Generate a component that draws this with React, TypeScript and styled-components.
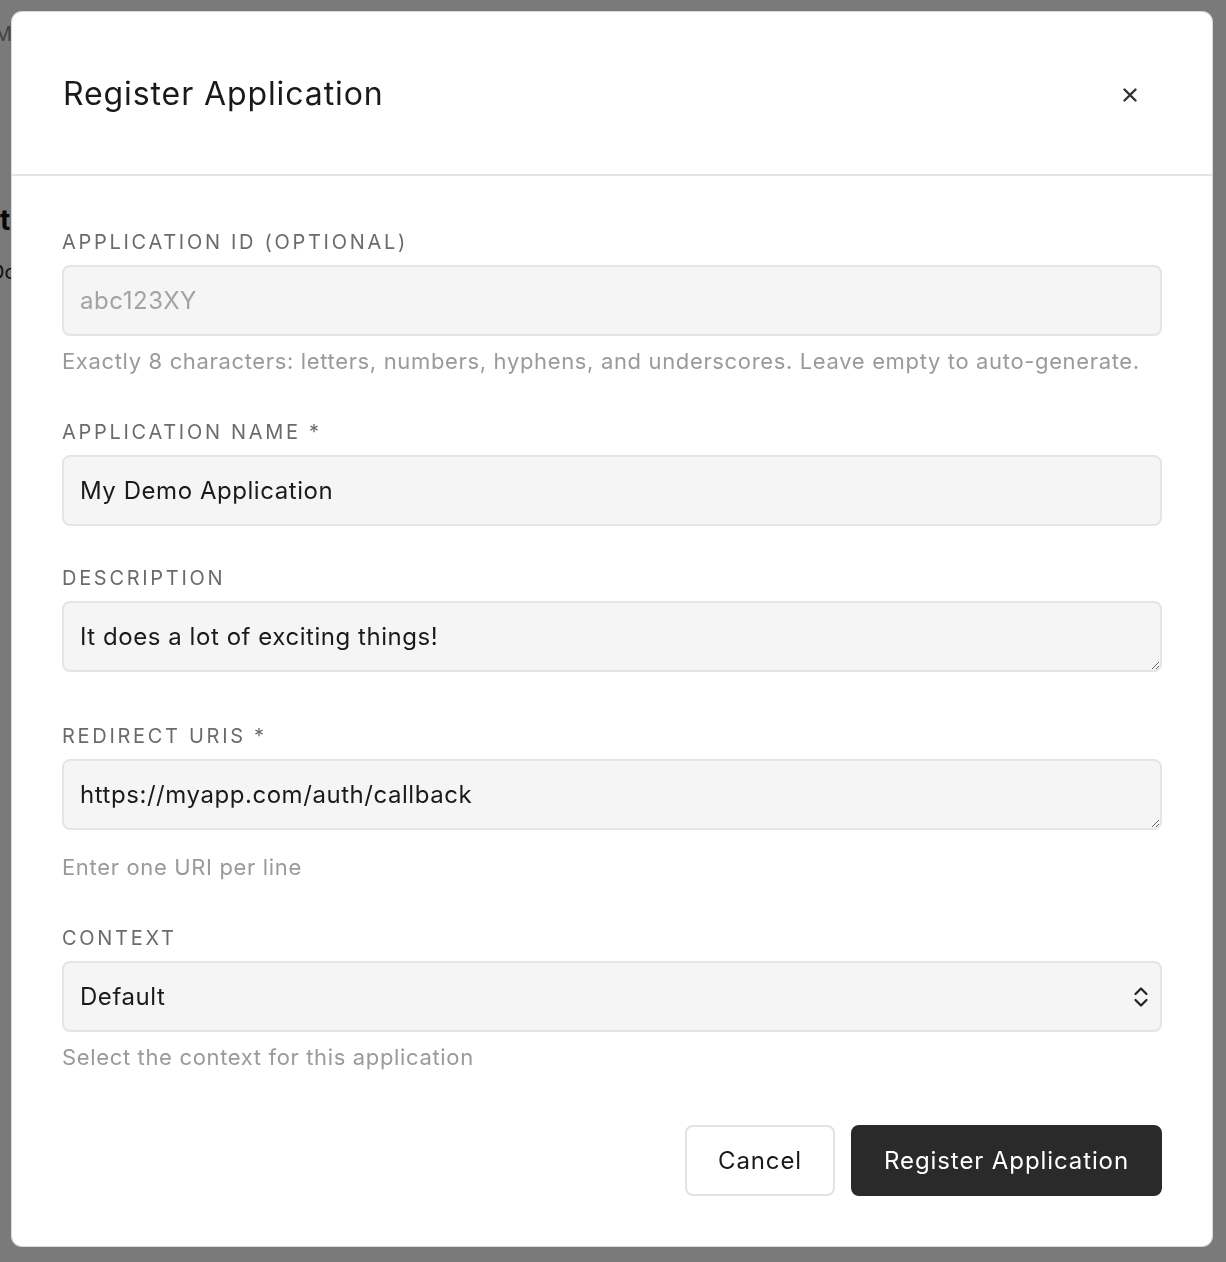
import styled, { createGlobalStyle } from "styled-components";

const GlobalStyle = createGlobalStyle`
  * {
    box-sizing: border-box;
  }
  html, body {
    margin: 0;
    padding: 0;
    background: #ffffff;
    font-family: Inter, "Noto Sans", "Liberation Sans", sans-serif;
  }
`;

const Page = styled.div`
  min-height: 1262px;
  padding-top: 22px;
  overflow: hidden;
`;

const PageLine = styled.div<{ $size: number; $weight?: number; $color: string; $shift: number; $top: number }>`
  margin-left: ${(p) => -p.$shift}px;
  margin-top: ${(p) => p.$top}px;
  font-size: ${(p) => p.$size}px;
  font-weight: ${(p) => p.$weight || 400};
  color: ${(p) => p.$color};
  line-height: 1.2;
  white-space: nowrap;
`;

const Overlay = styled.div`
  position: fixed;
  inset: 0;
  background: rgba(0, 0, 0, 0.52);
  padding: 12px 14px 16px 12px;
`;

const Modal = styled.div`
  width: 1200px;
  height: 1234px;
  background: #ffffff;
  border-radius: 10px;
  box-shadow: 0 0 0 1px #d9d9d9;
  display: flex;
  flex-direction: column;
`;

const Header = styled.div`
  height: 164px;
  padding: 0 50px 0 51px;
  display: flex;
  align-items: center;
  justify-content: space-between;
  border-bottom: 2px solid #e4e4e4;
`;

const Title = styled.h2`
  margin: 0;
  font-size: 32px;
  font-weight: 400;
  color: #1a1a1a;
  letter-spacing: 0.9px;
`;

const CloseButton = styled.button`
  width: 40px;
  height: 40px;
  margin: 4px 12px 0 0;
  border: none;
  background: transparent;
  padding: 0;
  display: flex;
  align-items: center;
  justify-content: center;
  cursor: pointer;
`;

const Body = styled.div`
  padding: 54px 50px 0 50px;
  flex: 1;
  display: flex;
  flex-direction: column;
`;

const Field = styled.div`
  margin-bottom: 40px;
`;

const Label = styled.label`
  display: block;
  font-size: 20px;
  line-height: 24px;
  letter-spacing: 2.7px;
  text-transform: uppercase;
  color: #6b6b6b;
  margin-bottom: 11px;
`;

const fieldBase = `
  display: block;
  width: 100%;
  height: 71px;
  background: #f5f5f5;
  border: 2px solid #e5e5e5;
  border-radius: 8px;
  font-family: Inter, "Noto Sans", "Liberation Sans", sans-serif;
  font-size: 24px;
  letter-spacing: 0.55px;
  color: #1a1a1a;
  padding: 0 16px;
  outline: none;
`;

const Input = styled.input`
  ${fieldBase}

  &::placeholder {
    color: #a3a3a3;
  }
`;

const TextArea = styled.textarea`
  ${fieldBase}
  padding: 19px 16px 0 16px;
  line-height: 30px;
  resize: vertical;
  margin-bottom: 12px;
`;

const SelectWrap = styled.div`
  position: relative;
`;

const Select = styled.select`
  ${fieldBase}
  appearance: none;
  -webkit-appearance: none;
  padding-right: 50px;
`;

const SelectIcon = styled.svg`
  position: absolute;
  right: 13px;
  top: 50%;
  transform: translateY(-50%);
  pointer-events: none;
`;

const Help = styled.div`
  padding: 10px 0 4px;
  font-size: 22px;
  line-height: 30px;
  color: #9a9a9a;
  letter-spacing: 0.65px;
`;

const Footer = styled.div`
  display: flex;
  justify-content: flex-end;
  gap: 16px;
  margin-top: 9px;
`;

const Button = styled.button<{ $primary?: boolean }>`
  height: 71px;
  padding: 0 31px;
  border-radius: 8px;
  font-family: Inter, "Noto Sans", "Liberation Sans", sans-serif;
  font-size: 24px;
  letter-spacing: 0.9px;
  cursor: pointer;
  border: 2px solid ${(p) => (p.$primary ? "#2a2a2a" : "#e3e3e3")};
  background: ${(p) => (p.$primary ? "#2a2a2a" : "#ffffff")};
  color: ${(p) => (p.$primary ? "#ffffff" : "#1a1a1a")};
`;

export default function App() {
  return (
    <>
      <GlobalStyle />
      <Page>
        <PageLine $size={20} $color="#8a8a8a" $shift={6} $top={0}>
          Modules
        </PageLine>
        <PageLine $size={28} $weight={700} $color="#111111" $shift={26} $top={158}>
          Site settings
        </PageLine>
        <PageLine $size={20} $color="#222222" $shift={10} $top={22}>
          Door applications
        </PageLine>
      </Page>
      <Overlay>
        <Modal>
          <Header>
            <Title>Register Application</Title>
            <CloseButton aria-label="Close">
              <svg width="14" height="14" viewBox="0 0 14 14">
                <path d="M1.5 1.5 L12.5 12.5 M12.5 1.5 L1.5 12.5" stroke="#333" strokeWidth="2.4" strokeLinecap="round" />
              </svg>
            </CloseButton>
          </Header>
          <Body>
            <Field>
              <Label>Application ID (optional)</Label>
              <Input placeholder="abc123XY" />
              <Help>Exactly 8 characters: letters, numbers, hyphens, and underscores. Leave empty to auto-generate.</Help>
            </Field>
            <Field>
              <Label>Application Name *</Label>
              <Input defaultValue="My Demo Application" />
            </Field>
            <Field>
              <Label>Description</Label>
              <TextArea defaultValue="It does a lot of exciting things!" />
            </Field>
            <Field>
              <Label>Redirect URIs *</Label>
              <TextArea defaultValue="https://myapp.com/auth/callback" />
              <Help>Enter one URI per line</Help>
            </Field>
            <Field>
              <Label>Context</Label>
              <SelectWrap>
                <Select defaultValue="default">
                  <option value="default">Default</option>
                </Select>
                <SelectIcon width="16" height="22" viewBox="0 0 16 22">
                  <path d="M2.5 8 L8 2.5 L13.5 8 M2.5 14 L8 19.5 L13.5 14" fill="none" stroke="#222" strokeWidth="2.2" strokeLinecap="round" strokeLinejoin="round" />
                </SelectIcon>
              </SelectWrap>
              <Help>Select the context for this application</Help>
            </Field>
            <Footer>
              <Button>Cancel</Button>
              <Button $primary>Register Application</Button>
            </Footer>
          </Body>
        </Modal>
      </Overlay>
    </>
  );
}
